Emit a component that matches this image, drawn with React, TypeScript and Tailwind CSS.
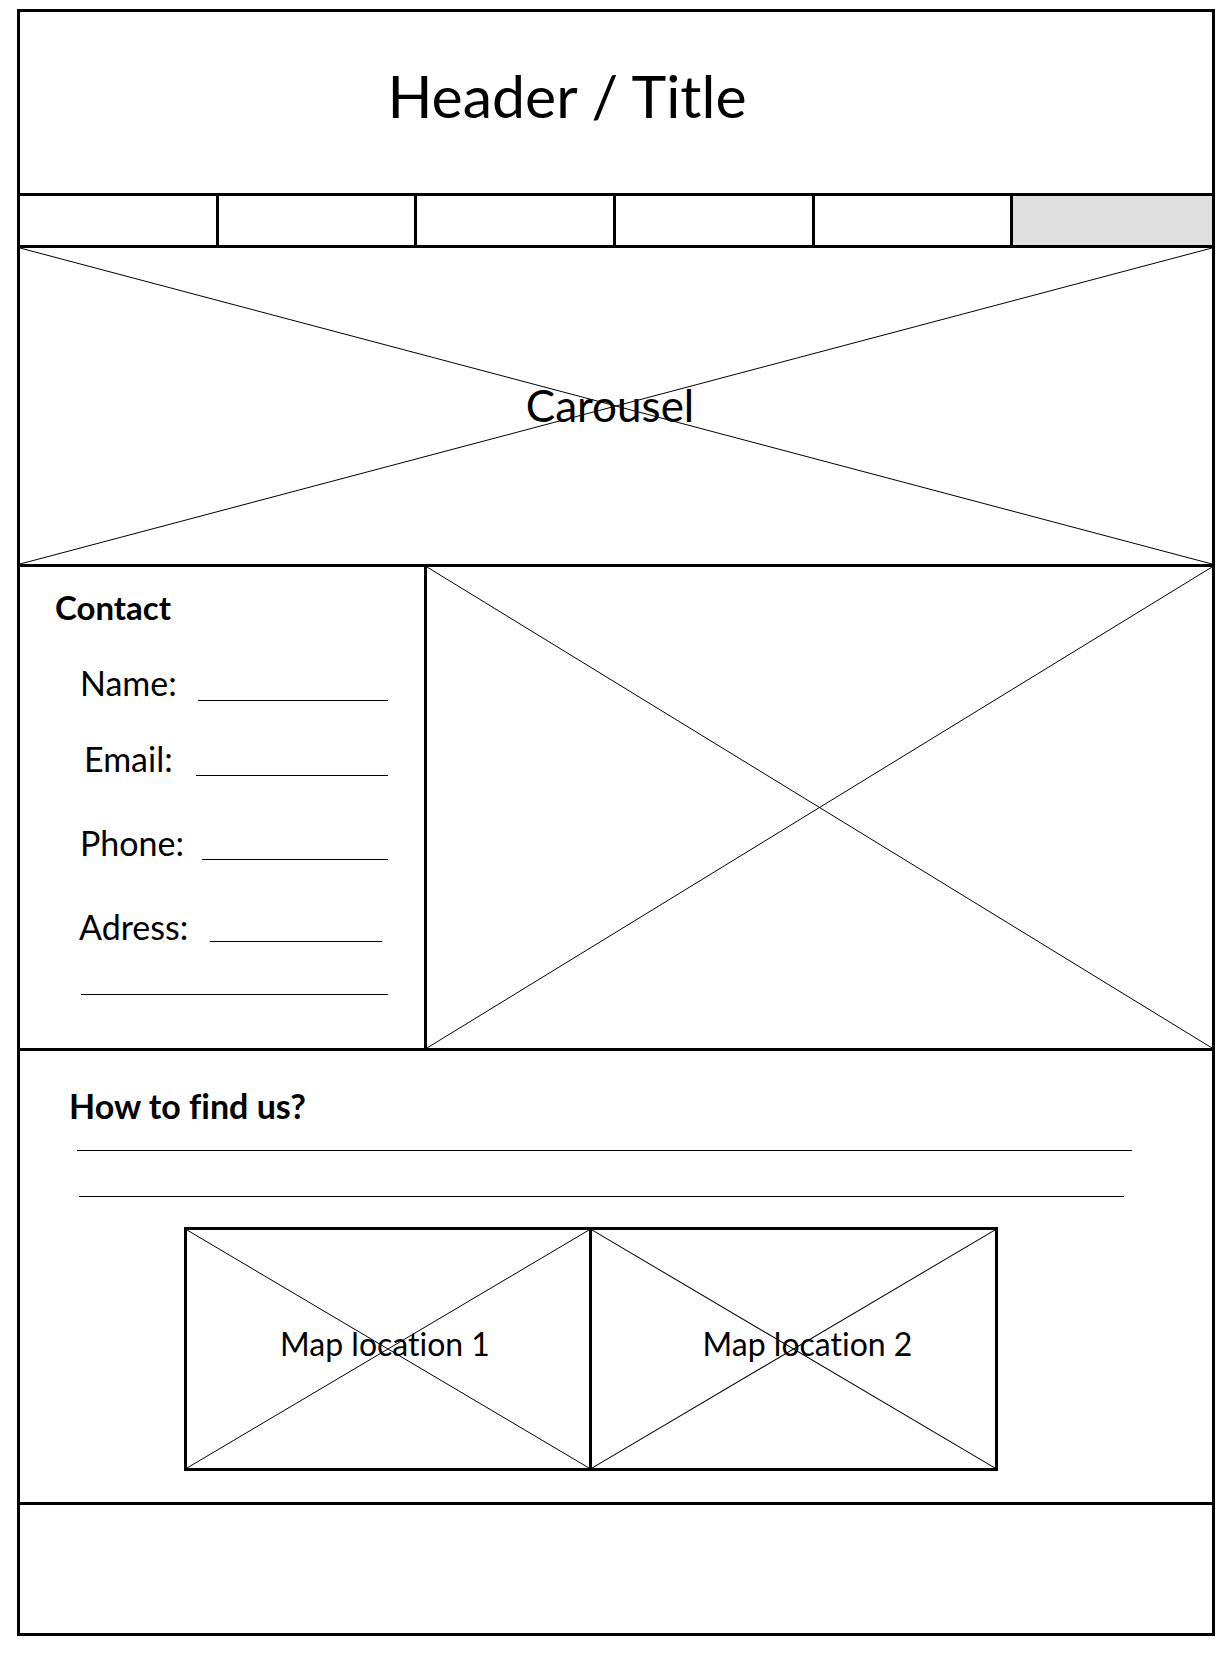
const font = { fontFamily: "Lato, 'Open Sans', sans-serif" };

function Cross() {
  return (
    <svg className="absolute inset-0 h-full w-full" viewBox="0 0 100 100" preserveAspectRatio="none">
      <line x1="0" y1="0" x2="100" y2="100" stroke="black" strokeWidth="1" vectorEffect="non-scaling-stroke" />
      <line x1="0" y1="100" x2="100" y2="0" stroke="black" strokeWidth="1" vectorEffect="non-scaling-stroke" />
    </svg>
  );
}

function Field({ label, ml, box, line, lineTop }: { label: string; ml: number; box: number; line: number; lineTop: string }) {
  return (
    <div className="flex" style={{ marginLeft: ml }}>
      <span className="text-[34px] leading-none" style={{ width: box }}>{label}</span>
      <div className={`h-px bg-black ${lineTop}`} style={{ width: line }} />
    </div>
  );
}

export default function App() {
  return (
    <div className="min-h-[1656px] bg-white pl-[17px] pt-[9px] text-black [font-variant-ligatures:none]" style={font}>
      <div className="w-[1198px] border-[3px] border-black">
        <header className="h-[181px] pr-[98px] pt-[54px] text-center">
          <h1 className="text-[59px] leading-none font-normal">Header / Title</h1>
        </header>

        <nav className="grid h-[55px] grid-cols-6 border-y-[3px] border-black">
          <div className="border-r-[3px] border-black" />
          <div className="border-r-[3px] border-black" />
          <div className="border-r-[3px] border-black" />
          <div className="border-r-[3px] border-black" />
          <div className="border-r-[3px] border-black" />
          <div className="bg-[#dfdfdf]" />
        </nav>

        <section className="relative flex h-[319px] items-center justify-center border-b-[3px] border-black pr-[12px] pb-[3px]">
          <Cross />
          <span className="relative text-[44px] leading-none">Carousel</span>
        </section>

        <section className="flex h-[484px] border-b-[3px] border-black">
          <div className="w-[407px] shrink-0 border-r-[3px] border-black pt-[24px]">
            <h2 className="ml-[35px] text-[33px] font-bold leading-none">Contact</h2>
            <div className="mt-[42px]">
              <Field label="Name:" ml={60} box={118} line={190} lineTop="mt-[34px]" />
            </div>
            <div className="mt-[41px]">
              <Field label="Email:" ml={64} box={112} line={192} lineTop="mt-[33px]" />
            </div>
            <div className="mt-[50px]">
              <Field label="Phone:" ml={60} box={122} line={186} lineTop="mt-[33px]" />
            </div>
            <div className="mt-[50px]">
              <Field label="Adress:" ml={59} box={131} line={172} lineTop="mt-[31px]" />
            </div>
            <div className="ml-[61px] mt-[50px] h-px w-[307px] bg-black" />
          </div>
          <div className="relative flex-1">
            <Cross />
          </div>
        </section>

        <section className="h-[454px] border-b-[3px] border-black pt-[38px]">
          <h2 className="ml-[49px] text-[34px] font-bold leading-none">How to find us?</h2>
          <div className="ml-[57px] mt-[27px] h-px w-[1055px] bg-black" />
          <div className="ml-[59px] mt-[45px] h-px w-[1045px] bg-black" />
          <div className="ml-[164px] mt-[30px] flex h-[244px]">
            <div className="relative flex w-[405px] items-center justify-center border-y-[3px] border-l-[3px] border-black pb-[10px] pr-[6px]">
              <Cross />
              <span className="relative text-[32px] leading-none">Map location 1</span>
            </div>
            <div className="relative flex w-[409px] items-center justify-center border-[3px] border-black pb-[10px] pl-[28px]">
              <Cross />
              <span className="relative text-[32px] leading-none">Map location 2</span>
            </div>
          </div>
        </section>

        <footer className="h-[128px]" />
      </div>
    </div>
  );
}
